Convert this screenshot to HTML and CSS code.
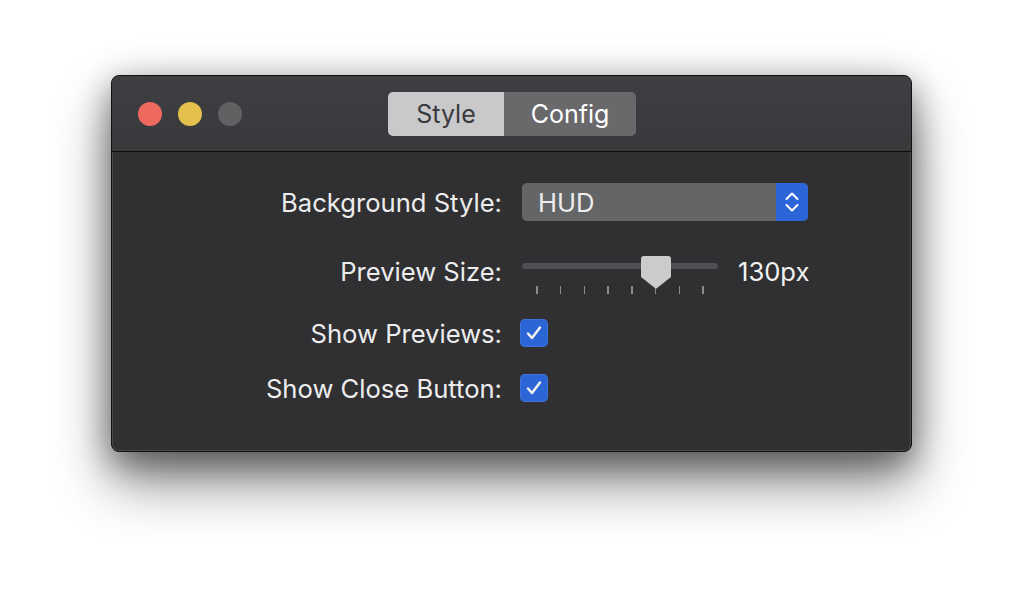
FILE: index.html
```html
<!DOCTYPE html>
<html>
<head>
<meta charset="utf-8">
<link rel="stylesheet" href="styles.css">
</head>
<body>
<div class="stage">
  <div class="window">
    <div class="titlebar">
      <div class="lights">
        <span class="light red"></span>
        <span class="light yellow"></span>
        <span class="light gray"></span>
      </div>
      <div class="segmented">
        <div class="seg seg-on">Style</div>
        <div class="seg seg-off">Config</div>
      </div>
      <div></div>
    </div>
    <div class="content">
      <div class="row row-popup">
        <div class="label">Background Style:</div>
        <div class="popup">
          <span class="popup-text">HUD</span>
          <span class="popup-arrows">
            <svg width="32" height="38" viewBox="0 0 32 38"><path d="M10.5 16 L16 10.5 L21.5 16" fill="none" stroke="#fff" stroke-width="2" stroke-linecap="round" stroke-linejoin="round"/><path d="M10.5 22 L16 27.5 L21.5 22" fill="none" stroke="#fff" stroke-width="2" stroke-linecap="round" stroke-linejoin="round"/></svg>
          </span>
        </div>
      </div>
      <div class="row row-slider">
        <div class="label label-slider">Preview Size:</div>
        <div class="slider">
          <div class="track"></div>
          <div class="ticks">
            <span class="tick"></span><span class="tick"></span><span class="tick"></span><span class="tick"></span><span class="tick"></span><span class="tick"></span><span class="tick"></span><span class="tick"></span>
          </div>
          <svg class="thumb" style="left:119px" width="30" height="33" viewBox="0 0 30 33"><path d="M3 0 H27 A3 3 0 0 1 30 3 V21 L15.5 32.5 H14.5 L0 21 V3 A3 3 0 0 1 3 0 Z" fill="#cbcbcb"/></svg>
        </div>
        <div class="value">130px</div>
      </div>
      <div class="row row-check">
        <div class="label">Show Previews:</div>
        <div class="checkbox">
          <svg width="28" height="28" viewBox="0 0 28 28"><path d="M8 14.5 L12 19 L20 8.5" fill="none" stroke="#f2f2f2" stroke-width="2.5" stroke-linecap="round" stroke-linejoin="round"/></svg>
        </div>
      </div>
      <div class="row row-check row-last">
        <div class="label">Show Close Button:</div>
        <div class="checkbox">
          <svg width="28" height="28" viewBox="0 0 28 28"><path d="M8 14.5 L12 19 L20 8.5" fill="none" stroke="#f2f2f2" stroke-width="2.5" stroke-linecap="round" stroke-linejoin="round"/></svg>
        </div>
      </div>
    </div>
  </div>
</div>
</body>
</html>
```
FILE: styles.css
```css
html, body {
  margin: 0;
  padding: 0;
  background: #ffffff;
}
body {
  font-family: Inter, "Liberation Sans", sans-serif;
  width: 1024px;
  height: 600px;
  overflow: hidden;
}
.stage {
  padding: 75px 0 0 111px;
}
.window {
  width: 801px;
  height: 377px;
  box-sizing: border-box;
  border: 1px solid #111112;
  border-radius: 8px;
  background: #303033;
  box-shadow: 0 30px 55px rgba(0, 0, 0, 0.48), 0 12px 30px rgba(0, 0, 0, 0.3), 0 0 40px rgba(0, 0, 0, 0.12), inset 0 0 0 1px rgba(255, 255, 255, 0.13);
  overflow: hidden;
}
.titlebar {
  height: 75px;
  border-bottom: 1px solid #0c0c0d;
  background: linear-gradient(#3e3f42, #38393b);
  display: grid;
  grid-template-columns: 1fr auto 1fr;
  align-items: center;
}
.lights {
  display: flex;
  gap: 16px;
  padding-left: 26px;
  margin-top: 1px;
}
.light {
  width: 24px;
  height: 24px;
  border-radius: 50%;
  display: block;
}
.red { background: #ee6a5e; }
.yellow { background: #e3c14c; }
.gray { background: #616164; }
.segmented {
  display: flex;
  height: 44px;
  border-radius: 5px;
  overflow: hidden;
  margin-top: 1px;
  margin-left: 1px;
}
.seg {
  display: flex;
  align-items: center;
  justify-content: center;
  font-size: 25px;
}
.seg-on {
  width: 116px;
  background: #c9c9cb;
  color: #3a3a3c;
}
.seg-off {
  width: 132px;
  background: #69696c;
  color: #ffffff;
}
.content {
  padding-top: 31px;
}
.row {
  display: flex;
  align-items: center;
}
.label {
  width: 390px;
  text-align: right;
  color: #ededed;
  font-size: 25.6px;
  flex: none;
}
.row-popup {
  height: 38px;
}
.popup {
  margin-left: 20px;
  width: 286px;
  height: 38px;
  border-radius: 5px;
  background: #646567;
  display: flex;
  align-items: center;
  overflow: hidden;
}
.popup-text {
  flex: 1;
  color: #ededed;
  font-size: 25.6px;
  padding-left: 16px;
}
.popup-arrows {
  width: 32px;
  height: 38px;
  background: #2b65d7;
  display: block;
}
.popup-arrows svg { display: block; }
.row-slider {
  margin-top: 29px;
  height: 44px;
  align-items: flex-start;
}
.label-slider {
  line-height: 44px;
}
.slider {
  position: relative;
  margin-left: 20px;
  width: 196px;
  height: 44px;
}
.track {
  margin-top: 13px;
  height: 6px;
  border-radius: 3px;
  background: #4e4f52;
}
.ticks {
  display: flex;
  justify-content: space-between;
  padding: 0 14px 0 14px;
  margin-top: 17px;
}
.tick {
  width: 1.5px;
  height: 8px;
  background: #8b8b8e;
  display: block;
}
.thumb {
  position: absolute;
  top: 6px;
}
.value {
  margin-left: 20px;
  color: #f2f2f2;
  font-size: 25.6px;
  line-height: 44px;
}
.row-check {
  height: 28px;
  margin-top: 25px;
}
.row-last {
  margin-top: 27px;
}
.checkbox {
  margin-left: 18px;
  width: 28px;
  height: 28px;
  border-radius: 5px;
  background: #2c65d5;
  box-shadow: inset 0 0 0 1px rgba(120, 160, 240, 0.25);
}
.checkbox svg { display: block; }
```
